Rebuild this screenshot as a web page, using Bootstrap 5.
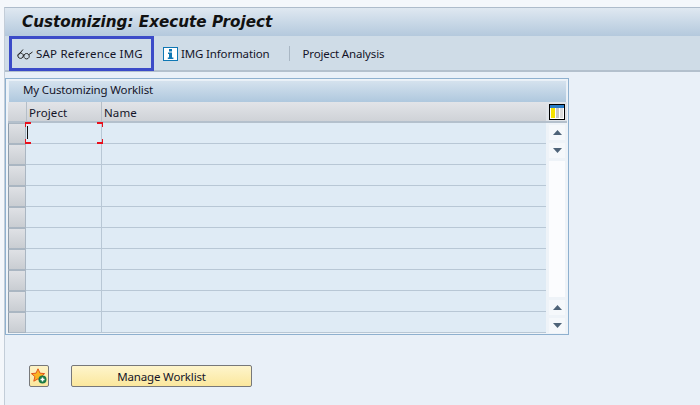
<!DOCTYPE html>
<html>
<head>
  <meta charset="UTF-8">
  <title>Customizing: Execute Project</title>
  <link href="https://cdn.jsdelivr.net/npm/bootstrap@5.3.0/dist/css/bootstrap.min.css" rel="stylesheet">
  <style>
    html, body { height: 405px; overflow: hidden; }
    body { background: #f4f7fb; font-family: "Noto Sans", sans-serif; font-size: 11.5px; letter-spacing: -0.15px; color: #141428; padding-top: 7px; }
    .sap-shell { height: 398px; margin-left: 4px; background: #e9f0f8; border-left: 1px solid #c3cdd8; border-top: 1px solid #aebccb; }
    .sap-title { height: 28px; padding-left: 17px; background: linear-gradient(#dfe8f1, #b4c9dd); font-family: "DejaVu Sans", sans-serif; font-size: 15.2px; letter-spacing: 0; font-weight: 700; font-style: italic; color: #111; line-height: 28px; }
    .sap-tools { height: 36px; background: #cfdce7; border-bottom: 2px solid #b3c0cd; }
    .tool-item { height: 35px; white-space: nowrap; }
    .tool-active { width: 145px; margin-left: 4px; padding-left: 5px; border: 3px solid #3b4bc8; letter-spacing: 0.2px; }
    .tool-active span { margin-left: -1px; }
    .tool-info { margin-left: 9px; }
    .tool-info span { margin-left: -1px; }
    .tool-sep { width: 1px; height: 15px; background: #a9b7c4; margin-left: 19px; margin-right: 13px; }
    .sap-panel { width: 564px; height: 257px; margin-top: 6px; margin-left: 0; border: 1px solid #8eb0cf; padding: 1px 1px 1px 2px; background: #eef3f8; }
    .panel-head { height: 22px; padding-left: 14px; line-height: 18px; background: linear-gradient(#d5e2ee, #afc8de); border: 1px solid #e9f0f7; border-bottom: 0; }
    .grid-wrap { width: 559px; }
    .col-rowsel { width: 18px; flex: none; }
    .col-project { width: 76px; flex: none; }
    .col-name { flex: 1 1 auto; }
    .col-side { width: 21px; flex: none; }
    .head-row { height: 21px; background: linear-gradient(#e2e4e8, #cfd2d7); border-bottom: 2px solid #b4c0cc; line-height: 21px; }
    .head-row .col-project, .head-row .col-name { padding-left: 2px; letter-spacing: 0.1px; }
    .head-row .col-project { border-left: 1px solid #b4bec8; border-right: 1px solid #b4bec8; }
    .data-row { height: 21px; }
    .data-row .col-rowsel { background: linear-gradient(#dfe1e5, #c9cdd2); border: 1px solid #aab6c2; border-left-color: #8d9cab; }
    .data-row .col-project { background: #dfebf5; border-bottom: 1px solid #b8c7d5; border-right: 1px solid #b8c7d5; position: relative; }
    .data-row .col-name { background: #dfebf5; border-bottom: 1px solid #b8c7d5; }
    .data-row .cursor-cell { z-index: 1; }
    .corner-mark { position: absolute; z-index: 2; width: 6px; height: 5px; border: 0 solid #e8101c; }
    .cm-tl { left: -1px; top: -1px; border-top-width: 2px; border-left-width: 1px; }
    .cm-tr { right: -2px; top: -1px; border-top-width: 2px; border-right-width: 1px; }
    .cm-bl { left: -1px; bottom: -1px; border-bottom-width: 2px; border-left-width: 1px; }
    .cm-br { right: -2px; bottom: -1px; border-bottom-width: 2px; border-right-width: 1px; }
    .text-caret { position: absolute; left: 1px; top: 3px; width: 1px; height: 13px; background: #111; }
    .side-bar { width: 21px; flex: none; background: #eef3f8; padding: 2px 2px 0 3px; gap: 3px; }
    .side-btn { height: 15px; background: #f5f8fb; }
    .side-fill { flex: 1 1 auto; background: #fbfcfe; }
    .side-head { background: #dfe3e8; border-bottom: 2px solid #b4c0cc; height: 21px; }
    .sap-actions { margin-top: 30px; padding-left: 24px; gap: 22px; }
    .fav-btn { width: 20px; height: 22px; border: 1px solid #77787a; border-radius: 2px; background: linear-gradient(#fdf3c6, #fbe79d); }
    .manage-btn { width: 181px; height: 22px; border: 1px solid #77787a; border-radius: 2px; background: linear-gradient(#fef5cc, #fbe79d); color: #141428; line-height: 21px; text-align: center; }
  </style>
</head>
<body>
  <div class="sap-shell">
    <div class="sap-title">Customizing: Execute Project</div>
    <div class="sap-tools d-flex align-items-start">
      <div class="tool-item tool-active d-flex align-items-center gap-1">
        <svg width="16" height="13" viewBox="0 0 16 13" fill="none" stroke="#222" stroke-width="1"><path d="M1 8.500 6 2.500M3.500 6a2.700 2.700 0 1 0 .1 0zM9.500 6.500a2.700 2.700 0 1 0 .1 0zM6 8 7 8.300M12 7.500 15.500 5"/></svg>
        <span>SAP Reference IMG</span>
      </div>
      <div class="tool-item tool-info d-flex align-items-center gap-1">
        <svg width="15" height="14" viewBox="0 0 15 14"><rect x=".5" y=".5" width="14" height="13" fill="#fff" stroke="#0f77b4"/><path fill="#0f77b4" d="M6 2h3v2.400H6zM5 5.600h4v5h1.400V12H4.800v-1.400H6V7H5z"/></svg>
        <span>IMG Information</span>
      </div>
      <div class="tool-sep align-self-center"></div>
      <div class="tool-item d-flex align-items-center"><span>Project Analysis</span></div>
    </div>
    <div class="sap-panel">
      <div class="panel-head">My Customizing Worklist</div>
      <div class="grid-wrap d-flex">
        <div class="flex-grow-1" id="grid">
          <div class="head-row d-flex">
            <div class="col-rowsel"></div>
            <div class="col-project">Project</div>
            <div class="col-name">Name</div>
          </div>
          <div class="data-row d-flex">
            <div class="col-rowsel"></div>
            <div class="col-project cursor-cell">
              <i class="corner-mark cm-tl"></i><i class="corner-mark cm-tr"></i><i class="corner-mark cm-bl"></i><i class="corner-mark cm-br"></i><i class="text-caret"></i>
            </div>
            <div class="col-name"></div>
          </div>
        </div>
        <div class="d-flex flex-column col-side">
          <div class="side-head d-flex align-items-center justify-content-center">
            <svg width="16" height="16" viewBox="0 0 16 16"><rect width="16" height="16" fill="#000"/><rect x="1" y="1" width="14" height="14" fill="#fff"/><rect x="1" y="1" width="14" height="3" fill="#2a7cc7"/><rect x="2" y="4" width="4" height="10" fill="#f7e400"/><rect x="7" y="4" width="3" height="10" fill="#c8c8c8"/><rect x="11" y="4" width="3" height="10" fill="#dcdcdc"/></svg>
          </div>
          <div class="side-bar d-flex flex-column flex-grow-1">
            <div class="side-btn d-flex align-items-center justify-content-center"><svg width="9" height="5"><path d="M4.500 0 9 5H0z" fill="#4e6378"/></svg></div>
            <div class="side-btn d-flex align-items-center justify-content-center"><svg width="9" height="5"><path d="M0 0h9L4.500 5z" fill="#4e6378"/></svg></div>
            <div class="side-fill"></div>
            <div class="side-btn d-flex align-items-center justify-content-center"><svg width="9" height="5"><path d="M4.500 0 9 5H0z" fill="#4e6378"/></svg></div>
            <div class="side-btn d-flex align-items-center justify-content-center"><svg width="9" height="5"><path d="M0 0h9L4.500 5z" fill="#4e6378"/></svg></div>
          </div>
        </div>
      </div>
    </div>
    <div class="sap-actions d-flex">
      <div class="fav-btn d-flex align-items-center justify-content-center">
        <svg width="16" height="16" viewBox="0 0 16 16"><path d="M7 .8 9 5.200l4.600.4-3.500 3 1.100 4.600L7 10.800l-4.200 2.400 1.100-4.600-3.500-3 4.600-.4z" fill="#fbb320" stroke="#e2561a"/><circle cx="11.500" cy="11.500" r="4" fill="#1a7a45"/><path d="M9.500 11.500h4M11.500 9.500v4" stroke="#fff" stroke-width="1.500"/></svg>
      </div>
      <div class="manage-btn">Manage Worklist</div>
    </div>
  </div>

  <script>
    // nine empty rows under the cursor row
    const grid = document.getElementById('grid');
    for (let i = 0; i < 9; i++) {
      const row = document.createElement('div');
      row.className = 'data-row d-flex';
      row.innerHTML = '<div class="col-rowsel"></div><div class="col-project"></div><div class="col-name"></div>';
      grid.appendChild(row);
    }
  </script>
  <script src="https://cdn.jsdelivr.net/npm/bootstrap@5.3.0/dist/js/bootstrap.bundle.min.js"></script>
</body>
</html>
